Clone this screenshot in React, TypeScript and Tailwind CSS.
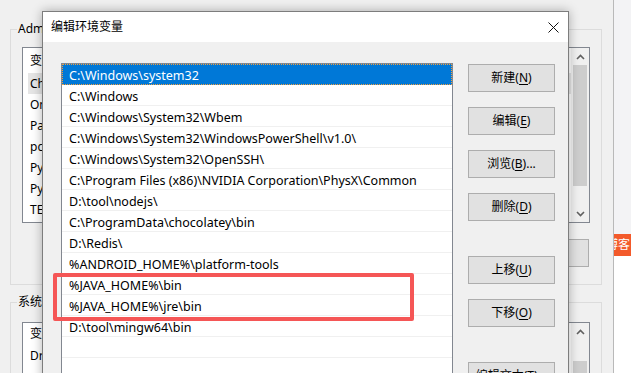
import React from 'react';

const paths = [
    'C:\\Windows\\system32',
    'C:\\Windows',
    'C:\\Windows\\System32\\Wbem',
    'C:\\Windows\\System32\\WindowsPowerShell\\v1.0\\',
    'C:\\Windows\\System32\\OpenSSH\\',
    'C:\\Program Files (x86)\\NVIDIA Corporation\\PhysX\\Common',
    'D:\\tool\\nodejs\\',
    'C:\\ProgramData\\chocolatey\\bin',
    'D:\\Redis\\',
    '%ANDROID_HOME%\\platform-tools',
    '%JAVA_HOME%\\bin',
    '%JAVA_HOME%\\jre\\bin',
    'D:\\tool\\mingw64\\bin',
    '',
    '',
    '',
];

const buttons = [
    { label: '新建', key: 'N', suffix: '', gap: 'mt-0' },
    { label: '编辑', key: 'E', suffix: '', gap: 'mt-[15px]' },
    { label: '浏览', key: 'B', suffix: '...', gap: 'mt-[15px]' },
    { label: '删除', key: 'D', suffix: '', gap: 'mt-[15px]' },
    { label: '上移', key: 'U', suffix: '', gap: 'mt-[35px]' },
    { label: '下移', key: 'O', suffix: '', gap: 'mt-[15px]' },
    { label: '编辑文本', key: 'T', suffix: '...', gap: 'mt-[35px]' },
];

const userVars = ['ChocolateyLastPathUpdate', 'OneDrive', 'Path', 'pcmanager', 'PyCharm', 'PyCharm Community Edition', 'TEMP'];

const font = 'font-["Segoe_UI","Noto_Sans","Noto_Sans_CJK_SC",sans-serif]';

function Chevron({ up }: { up?: boolean }) {
    return (
        <svg width="9" height="6" viewBox="0 0 9 6" className={up ? '' : 'rotate-180'}>
            <polyline points="1,5 4.5,1.5 8,5" fill="none" stroke="#606060" strokeWidth="1.6" />
        </svg>
    );
}

function BackList({ rows, thumb }: { rows: string[]; thumb: boolean }) {
    return (
        <div className="flex w-[568px] h-[176px] border border-[#828790] bg-white">
            <div className="flex-1 flex flex-col pl-[5px] text-[12px] text-black">
                <div className="h-[25px] flex items-center pl-[2px]">变量</div>
                {rows.map((r, i) => (
                    <div key={i} className={`h-[21px] flex items-center pl-[2px] ${i === 0 && thumb ? 'bg-[#e5e5e5]' : ''}`}>
                        {r}
                    </div>
                ))}
            </div>
            <div className="w-[18px] bg-[#f0f0f0] flex flex-col">
                <div className="h-[17px] flex items-center justify-center"><Chevron up /></div>
                <div className="h-[121px] mx-[2px] bg-[#cdcdcd]"></div>
                <div className="flex-1"></div>
                <div className="h-[17px] flex items-center justify-center"><Chevron /></div>
            </div>
        </div>
    );
}

export default function App() {
    return (
        <div className={`relative w-[631px] h-[373px] overflow-hidden bg-white ${font}`}>
            {/* window behind */}
            <div className="absolute left-0 top-0 w-[614px] h-[373px] bg-[#f0f0f0] border-r border-[#b9b9b9] shadow-[2px_0_6px_rgba(0,0,0,0.12)] pl-[10px] pt-[29px]">
                <div className="relative w-[592px] h-[256px] border border-[#dcdcdc] px-[11px] pt-[17px]">
                    <span className="absolute -top-[9px] left-[6px] px-[1px] bg-[#f0f0f0] text-[12px] text-black leading-[16px]">
                        Administrator 的用户变量(U)
                    </span>
                    <BackList rows={userVars} thumb />
                    <div className="flex justify-end mt-[16px] pr-[1px]">
                        <div className="w-[76px] h-[28px] bg-[#e1e1e1] border border-[#adadad]"></div>
                    </div>
                </div>
                <div className="relative w-[592px] h-[120px] mt-[17px] border border-[#dcdcdc] px-[11px] pt-[19px]">
                    <span className="absolute -top-[9px] left-[6px] px-[1px] bg-[#f0f0f0] text-[12px] text-black leading-[16px]">
                        系统变量(S)
                    </span>
                    <div className="flex w-[568px] h-[176px] border border-[#828790] bg-white">
                        <div className="flex-1 flex flex-col pl-[5px] text-[12px] text-black">
                            <div className="h-[22px] flex items-center pl-[2px]">变量</div>
                            <div className="h-[21px] flex items-center pl-[2px]">DriverData</div>
                        </div>
                        <div className="w-[18px] bg-[#f0f0f0] flex flex-col">
                            <div className="h-[17px] flex items-center justify-center"><Chevron up /></div>
                            <div className="h-[100px] mx-[2px] mt-[21px] bg-[#cdcdcd]"></div>
                        </div>
                    </div>
                </div>
            </div>

            {/* page behind, right strip */}
            <div className="absolute left-[614px] top-0 right-0 h-[373px] flex flex-col">
                <div className="h-[234px] bg-[#f3f3f5]"></div>
                <div className="h-[22px] bg-[#f35a2b] flex justify-end items-center pr-[1px] overflow-hidden text-[12px] text-white whitespace-nowrap">
                    博客
                </div>
                <div className="flex-1 bg-white"></div>
            </div>

            {/* edit dialog */}
            <div className="absolute left-[42px] top-[11px] w-[527px] h-[420px] border border-[#7d7d7d] bg-[#f0f0f0] shadow-[0_0_10px_rgba(0,0,0,0.3)] flex flex-col">
                <div className="h-[30px] bg-white flex items-center justify-between pl-[8px] pr-[9px]">
                    <span className="text-[12px] text-black">编辑环境变量</span>
                    <svg width="11" height="11" viewBox="0 0 11 11">
                        <path d="M0.5 0.5 L10.5 10.5 M10.5 0.5 L0.5 10.5" stroke="#111" strokeWidth="1" />
                    </svg>
                </div>
                <div className="flex pl-[18px] pt-[21px] gap-[15px]">
                    <div className="w-[392px] h-[360px] border border-[#828790] bg-white flex flex-col">
                        {paths.map((p, i) => (
                            <div
                                key={i}
                                className={`h-[21px] shrink-0 flex items-center pt-[4px] pl-[7px] text-[12.5px] whitespace-nowrap overflow-hidden ${
                                    i === 0
                                        ? 'bg-[#0078d7] text-white outline-1 outline-dotted outline-[#f0a040] -outline-offset-1'
                                        : 'text-black border-b border-[#f0f0f0]'
                                }`}
                            >
                                {p}
                            </div>
                        ))}
                    </div>
                    <div className="w-[87px] flex flex-col pt-[1px]">
                        {buttons.map((b) => (
                            <div
                                key={b.key}
                                className={`${b.gap} h-[28px] bg-[#e1e1e1] border border-[#adadad] flex items-center justify-center text-[12px] text-black`}
                            >
                                {b.label}(<span className="underline underline-offset-2">{b.key}</span>){b.suffix}
                            </div>
                        ))}
                    </div>
                </div>
            </div>

            {/* highlight box */}
            <div className="absolute left-[53px] top-[273px] w-[361px] h-[48px] border-4 border-[#f55656] rounded-[2px]"></div>
        </div>
    );
}
